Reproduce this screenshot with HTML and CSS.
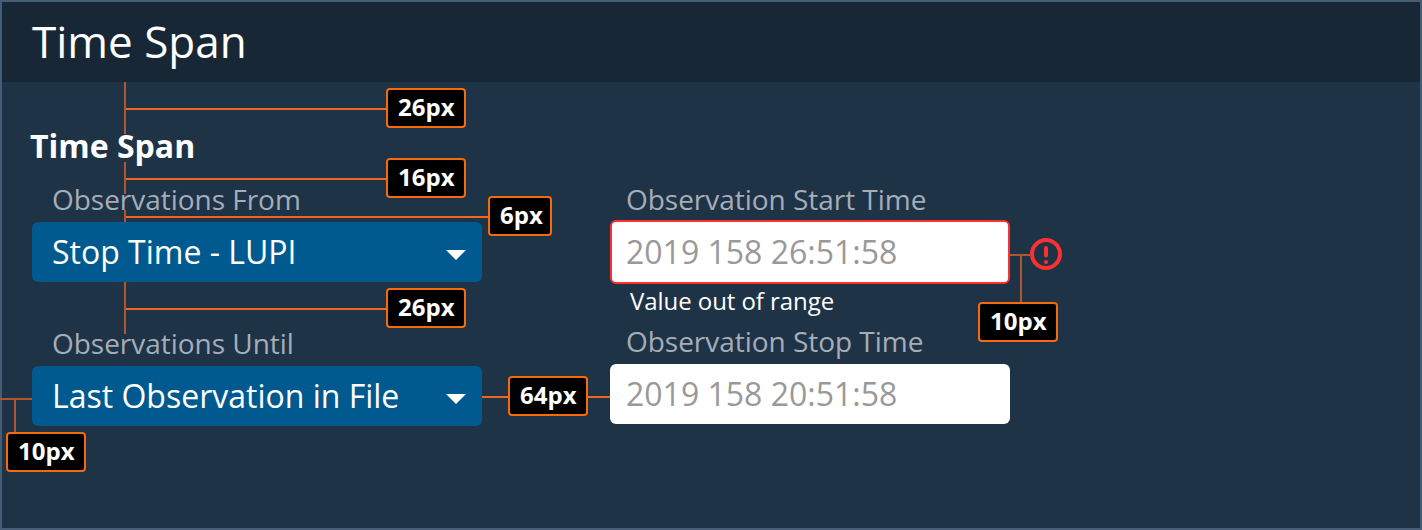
FILE: index.html
```html
<!DOCTYPE html>
<html lang="en">
<head>
<meta charset="utf-8">
<title>Time Span</title>
<link rel="stylesheet" href="styles.css">
</head>
<body>
<main class="panel">
  <header class="panel-header"><h1 class="panel-title">Time Span</h1></header>
  <section class="panel-body">
    <h2 class="section-title">Time Span</h2>
    <div class="columns">
      <div class="column column-select">
        <div class="field">
          <label class="label">Observations From</label>
          <button class="select" type="button"><span>Stop Time - LUPI</span>
            <svg class="caret" viewBox="0 0 20 10"><path d="M0 0H20L10 10Z"/></svg></button>
        </div>
        <div class="field">
          <label class="label">Observations Until</label>
          <button class="select" type="button"><span>Last Observation in File</span>
            <svg class="caret" viewBox="0 0 20 10"><path d="M0 0H20L10 10Z"/></svg></button>
        </div>
      </div>
      <div class="column column-input">
        <div class="field">
          <label class="label">Observation Start Time</label>
          <div class="input-row">
            <div class="input input-error">2019 158 26:51:58</div>
            <svg class="alert" viewBox="0 0 32 32"><circle cx="16" cy="16" r="14"/><path d="M16 10V17.6"/><circle class="dot" cx="16" cy="24" r="2"/></svg>
          </div>
          <p class="message">Value out of range</p>
        </div>
        <div class="field">
          <label class="label">Observation Stop Time</label>
          <div class="input input-plain">2019 158 20:51:58</div>
        </div>
      </div>
    </div>
  </section>

  <svg class="guides" viewBox="0 0 1422 530">
    <path class="guide-dim" d="M125 82V134M125 162V194M125 210V222M125 282V334M0 399H32M15 400V432M1010 255H1030M1021 256V302"/>
    <path class="guide" d="M126 109H386M126 179H386M126 217H488M126 309H386M482 397H508M588 397H610"/>
  </svg>
  <span class="badge badge-top">26px</span>
  <span class="badge badge-title">16px</span>
  <span class="badge badge-label">6px</span>
  <span class="badge badge-rows">26px</span>
  <span class="badge badge-columns">64px</span>
  <span class="badge badge-left">10px</span>
  <span class="badge badge-alert">10px</span>
</main>
</body>
</html>
```
FILE: styles.css
```css
* { box-sizing: border-box; }

body {
  margin: 0;
  font-family: "Open Sans", "Noto Sans", sans-serif;
  color: #fff;
}

h1, h2, p { margin: 0; }

.panel {
  position: relative;
  width: 1422px;
  height: 530px;
  border: 2px solid #455e76;
  background: #1f3347;
  white-space: nowrap;
}

.panel-header {
  height: 80px;
  padding-left: 30px;
  background: #182735;
}

.panel-title {
  font-size: 44px;
  font-weight: 400;
  line-height: 78px;
}

.panel-body { padding: 44px 0 0 30px; }

.section-title {
  margin-left: -2px;
  font-size: 32px;
  font-weight: 700;
  line-height: 40px;
}

.columns {
  display: flex;
  gap: 128px;
  margin-top: 12px;
}

.column {
  display: flex;
  flex-direction: column;
}

.column-select { width: 450px; gap: 40px; }
.column-input { width: 400px; gap: 4px; }

.label {
  display: block;
  height: 42px;
  font-size: 28px;
  line-height: 42px;
  letter-spacing: -0.03px;
  color: #a5adb9;
}

.column-select .label { padding-left: 20px; }
.column-input .label { padding-left: 16px; }

.select {
  display: flex;
  align-items: center;
  justify-content: space-between;
  width: 450px;
  height: 60px;
  margin: 2px 0 0;
  padding: 0 16px 1px 20px;
  border: 0;
  border-radius: 6px;
  background: #005a8f;
  color: #fff;
  font: 400 32px/44px "Open Sans", "Noto Sans", sans-serif;
}

.caret {
  width: 20px;
  height: 10px;
  margin-top: 6px;
  fill: #fff;
}

.input-row {
  display: flex;
  align-items: center;
  gap: 20px;
}

.input {
  flex: none;
  display: flex;
  align-items: center;
  width: 400px;
  height: 60px;
  padding: 0 0 1px 16px;
  border-radius: 6px;
  background: #fff;
  color: #999;
  font-size: 32px;
  line-height: 43px;
}

.input-error {
  height: 64px;
  padding-left: 14px;
  border: 2px solid #ff3030;
}

.input-plain { margin-top: 2px; }

.alert {
  flex: none;
  width: 32px;
  height: 32px;
  margin-top: 4px;
  fill: none;
  stroke: #ff3030;
  stroke-width: 4;
  stroke-linecap: round;
}

.alert .dot { fill: #ff3030; stroke: none; }

.message {
  height: 32px;
  padding-left: 20px;
  font-size: 24px;
  line-height: 34px;
  letter-spacing: -0.06px;
}

.guides {
  position: absolute;
  left: -2px;
  top: -2px;
  width: 1422px;
  height: 530px;
  fill: none;
  stroke-width: 2;
  pointer-events: none;
}

.guide { stroke: #f26522; }
.guide-dim { stroke: #b15630; }

.badge {
  position: absolute;
  display: flex;
  padding-left: 10px;
  width: 80px;
  height: 40px;
  border: 2px solid #f76a0c;
  border-radius: 4px;
  background: #000;
  font-size: 24px;
  font-weight: 700;
  line-height: 34px;
}

.badge-top { left: 384px; top: 86px; }
.badge-title { left: 384px; top: 156px; }
.badge-label { left: 486px; top: 194px; width: 64px; }
.badge-rows { left: 384px; top: 286px; }
.badge-columns { left: 506px; top: 374px; }
.badge-left { left: 4px; top: 430px; }
.badge-alert { left: 976px; top: 300px; }
```
